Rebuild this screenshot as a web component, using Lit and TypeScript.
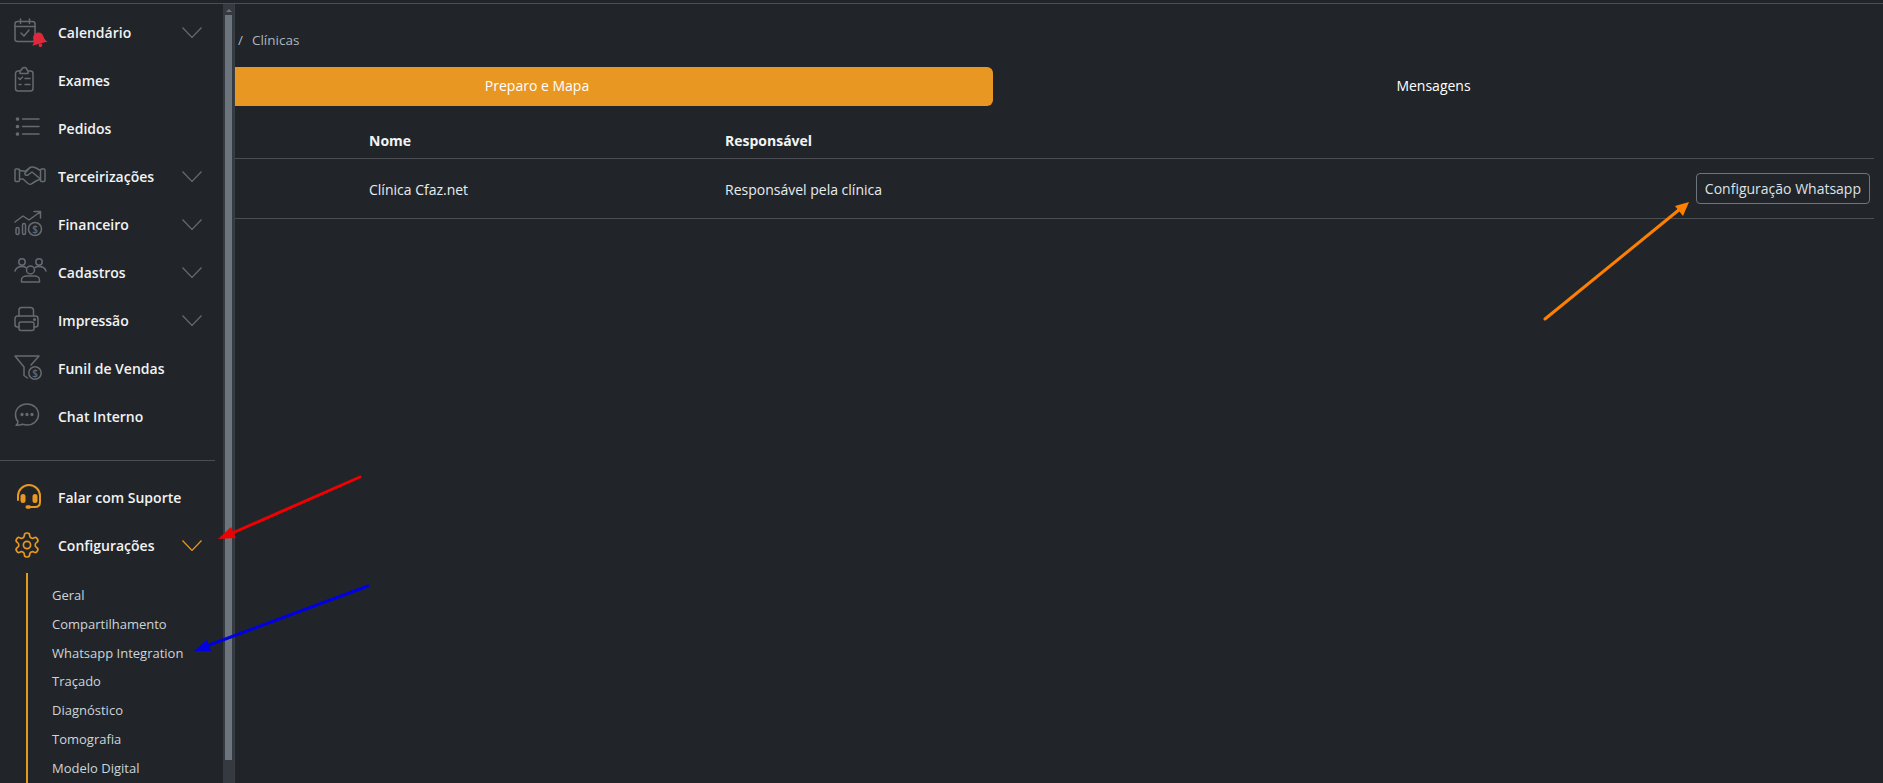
import { LitElement, html, css, svg } from 'lit';
import { customElement } from 'lit/decorators.js';

const coin = (cx: number, cy: number, r: number) => svg`
  <circle cx=${cx} cy=${cy} r=${r}></circle>
  <text x=${cx} y=${cy + 3.6} text-anchor="middle" font-size="10" font-family="Open Sans, sans-serif" fill="currentColor" stroke="none">$</text>`;

const icons: Record<string, unknown> = {
  calendar: svg`
    <rect x="2" y="5.5" width="20" height="20" rx="2.5"></rect>
    <path d="M2 10.5h20M7.5 3v4.5M16.5 3v4.5M8 17l3 3 5-6"></path>
    <g transform="rotate(-15 26 24)" fill="#e0283c" stroke="none">
      <path d="M26 16.5c-3.5 0-5.3 2.8-5.3 5.800 0 3-1.700 4.600-2.700 5.400h16c-1-.8-2.700-2.400-2.700-5.400 0-3-1.800-5.800-5.300-5.800z"></path>
      <circle cx="26" cy="29.5" r="1.8"></circle>
    </g>`,
  clipboard: svg`
    <path d="M7 7H5a2.5 2.5 0 0 0-2.5 2.5v15A2.5 2.5 0 0 0 5 27h12.5a2.5 2.5 0 0 0 2.5-2.5v-15A2.5 2.5 0 0 0 17.5 7H15"></path>
    <path d="M7 9.500V7.500A1.500 1.500 0 0 1 8.500 6c.3-1.500 1.400-2.500 2.800-2.500s2.500 1 2.700 2.500a1.500 1.500 0 0 1 1 1.500v2z"></path>
    <path d="M5.500 14l1.500 1.500 2.500-2.500M12 14.500h5M6 20.500h2M12 20.500h5"></path>`,
  list: svg`
    <circle cx="4.5" cy="7" r="1.1" fill="currentColor"></circle>
    <circle cx="4.5" cy="14.5" r="1.1" fill="currentColor"></circle>
    <circle cx="4.5" cy="22" r="1.1" fill="currentColor"></circle>
    <path d="M9.500 7h16.500M9.500 14.500h16.500M9.500 22h16.500"></path>`,
  handshake: svg`
    <rect x="2" y="9" width="4.5" height="12.5" rx="1"></rect>
    <rect x="27.5" y="9" width="4.5" height="12.5" rx="1"></rect>
    <path d="M6.500 10.500l5.500.8 5-3.800c2-1 4-.5 6 .5l4.500 2.500"></path>
    <path d="M17 7.500l-5 5.500c-1 1.500 1 3 3 2l4-3 8.500 7"></path>
    <path d="M6.500 19H10l5 4.500c1.500 1 3 1 4 0l4-2.500 4.500-2"></path>`,
  finance: svg`
    <path d="M2 14l8-6 6 4 11-8M21 3.500h6.500V10"></path>
    <rect x="3" y="19.5" width="3" height="7" rx="1.5"></rect>
    <rect x="9.5" y="15.5" width="3" height="11" rx="1.5"></rect>
    ${coin(22, 21, 6.5)}`,
  people: svg`
    <circle cx="9" cy="6" r="3.2"></circle>
    <circle cx="26" cy="6" r="3.2"></circle>
    <circle cx="17.5" cy="14" r="4"></circle>
    <path d="M8.500 26v-2c0-3 3-4 5-4h8c2 0 5 1 5 4v2z"></path>
    <path d="M2 15c1-3 4-4.500 7-4.500 1.500 0 3 .5 4 1M33 15c-1-3-4-4.500-7-4.500-1.500 0-3 .5-4 1"></path>`,
  printer: svg`
    <path d="M6 12V6a2.500 2.500 0 0 1 2.500-2.500h9a3 3 0 0 1 3 3V12"></path>
    <path d="M6 23H4.500A2.500 2.500 0 0 1 2 20.500v-6A2.500 2.500 0 0 1 4.500 12h18a2.500 2.500 0 0 1 2.500 2.500v6a2.500 2.500 0 0 1-2.500 2.500H21"></path>
    <rect x="6" y="18" width="15" height="8.5" rx="2"></rect>
    <circle cx="21.5" cy="15.5" r=".8" fill="currentColor"></circle>`,
  funnel: svg`
    <path d="M2 4h24l-8 9M2 4l9 11v8.500l3.500 2.500"></path>
    ${coin(22, 21, 6.2)}`,
  chat: svg`
    <path d="M5 21.500C3 19.700 2.500 17 2.500 14.500 2.500 8.500 7.500 4 14 4s11.500 4.500 11.500 10.500S20.500 25 14 25c-1.500 0-3-.3-4.500-.7-1.500.7-4 1-6.500 1 1-.7 2-2 2-3.800z"></path>
    <circle cx="9" cy="14.5" r=".9" fill="currentColor"></circle>
    <circle cx="14" cy="14.5" r=".9" fill="currentColor"></circle>
    <circle cx="19" cy="14.5" r=".9" fill="currentColor"></circle>`,
  headset: svg`
    <path stroke-width="2" d="M5 19v-4a11 11 0 0 1 22 0v6c0 3-2 5-5 5h-6"></path>
    <rect x="7.5" y="13" width="5" height="9" rx="2.5" fill="currentColor" stroke="none"></rect>
    <rect x="19.5" y="13" width="5" height="9" rx="2.5" fill="currentColor" stroke="none"></rect>
    <rect x="12.5" y="24.3" width="5.5" height="3.4" rx="1.7" fill="currentColor" stroke="none"></rect>`,
  gear: svg`
    <g transform="translate(-0.4 1.6) scale(1.2)" stroke-width="1.4">
      <path d="M12.220 2h-.44a2 2 0 0 0-2 2v.18a2 2 0 0 1-1 1.730l-.43.25a2 2 0 0 1-2 0l-.15-.08a2 2 0 0 0-2.730.73l-.22.38a2 2 0 0 0 .73 2.730l.15.1a2 2 0 0 1 1 1.720v.51a2 2 0 0 1-1 1.740l-.15.09a2 2 0 0 0-.73 2.730l.22.38a2 2 0 0 0 2.730.73l.15-.08a2 2 0 0 1 2 0l.43.25a2 2 0 0 1 1 1.730V20a2 2 0 0 0 2 2h.44a2 2 0 0 0 2-2v-.18a2 2 0 0 1 1-1.730l.43-.25a2 2 0 0 1 2 0l.15.08a2 2 0 0 0 2.730-.73l.22-.39a2 2 0 0 0-.73-2.730l-.15-.08a2 2 0 0 1-1-1.740v-.5a2 2 0 0 1 1-1.740l.15-.09a2 2 0 0 0 .73-2.730l-.22-.38a2 2 0 0 0-2.730-.73l-.15.08a2 2 0 0 1-2 0l-.43-.25a2 2 0 0 1-1-1.730V4a2 2 0 0 0-2-2z"></path>
      <circle cx="12" cy="12" r="3"></circle>
    </g>`,
};

type NavItem = { label: string; icon: string; expandable?: boolean };

const primaryItems: NavItem[] = [
  { label: 'Calendário', icon: 'calendar', expandable: true },
  { label: 'Exames', icon: 'clipboard' },
  { label: 'Pedidos', icon: 'list' },
  { label: 'Terceirizações', icon: 'handshake', expandable: true },
  { label: 'Financeiro', icon: 'finance', expandable: true },
  { label: 'Cadastros', icon: 'people', expandable: true },
  { label: 'Impressão', icon: 'printer', expandable: true },
  { label: 'Funil de Vendas', icon: 'funnel' },
  { label: 'Chat Interno', icon: 'chat' },
];

const settingsLinks = [
  'Geral',
  'Compartilhamento',
  'Whatsapp Integration',
  'Traçado',
  'Diagnóstico',
  'Tomografia',
  'Modelo Digital',
];

@customElement('app-root')
export class AppRoot extends LitElement {
  static styles = css`
    :host {
      display: block;
      position: relative;
      height: 783px;
      overflow: hidden;
      background: #212529;
      color: #e9ecef;
      font-family: 'Open Sans', sans-serif;
      font-size: 14px;
    }

    .top-line {
      height: 3px;
      border-bottom: 1px solid #4b4f54;
    }

    .main {
      padding: 0 9px 0 79px;
    }

    .breadcrumb {
      display: flex;
      gap: 9px;
      height: 63px;
      padding: 26px 0 0 159px;
      box-sizing: border-box;
      color: #adb5bd;
      font-size: 13.5px;
      line-height: 20px;
    }

    .tabs {
      display: grid;
      grid-template-columns: 914px 1fr;
      height: 39px;
      line-height: 38px;
      text-align: center;
      color: #fff;
    }

    .tab.active {
      padding-left: 2px;
      background: #e89723;
      border-radius: 6px;
    }

    .row {
      display: grid;
      grid-template-columns: 290px 356px 1fr auto;
      align-items: center;
      border-bottom: 1px solid #4b4f54;
    }

    .row.head {
      height: 53px;
      padding-top: 16px;
      box-sizing: border-box;
      font-weight: 700;
      color: #f1f3f5;
    }

    .row.body {
      height: 59px;
    }

    .row.body span {
      padding-top: 2px;
    }

    .whatsapp {
      margin-right: 4px;
      padding: 0 8px;
      height: 31px;
      border: 1px solid #6c757d;
      border-radius: 4px;
      background: transparent;
      color: #dee2e6;
      font: inherit;
    }

    .sidebar {
      position: absolute;
      left: 0;
      top: 4px;
      bottom: 0;
      width: 235px;
      display: flex;
      background: #212529;
      border-right: 1px solid #3a3f45;
      box-sizing: border-box;
    }

    .nav {
      flex: 1;
      min-width: 0;
      padding-top: 4px;
      overflow: hidden;
    }

    .nav-item {
      display: flex;
      align-items: center;
      height: 48px;
      padding: 0 21px 0 13px;
      color: #646b72;
      font-weight: 600;
    }

    .nav-item.accent {
      color: #e8981f;
    }

    .nav-item .icon {
      flex: none;
      width: 32px;
      height: 32px;
      margin-right: 13px;
      overflow: visible;
      fill: none;
      stroke: currentColor;
      stroke-width: 1.5;
      stroke-linecap: round;
      stroke-linejoin: round;
    }

    .nav-item .label {
      flex: 1;
      color: #f1f3f5;
    }

    .nav-item .chevron {
      width: 20px;
      height: 11px;
      fill: none;
      stroke: currentColor;
      stroke-width: 1.2;
    }

    .divider {
      height: 1px;
      margin: 20px 8px 12px 0;
      background: #4b4f54;
    }

    .submenu {
      margin: 4px 0 0 26px;
      padding: 8px 0 30px 24px;
      border-left: 2px solid #e8981f;
    }

    .submenu div {
      height: 28.8px;
      line-height: 29px;
      font-size: 13px;
      color: #ced4da;
    }

    .scrollbar {
      flex: none;
      width: 11px;
      display: flex;
      flex-direction: column;
      align-items: center;
      background: #343a40;
    }

    .scrollbar .up {
      width: 0;
      height: 0;
      margin: 5px 0 3px;
      border: 3px solid transparent;
      border-top: 0;
      border-bottom: 3px solid #6c757d;
    }

    .scrollbar .thumb {
      width: 7px;
      height: 745px;
      background: #6c757d;
    }

    .annotations {
      position: absolute;
      inset: 0;
      width: 100%;
      height: 100%;
      pointer-events: none;
    }
  `;

  renderNavItem(item: NavItem, accent = false) {
    return html`
      <div class="nav-item ${accent ? 'accent' : ''}">
        <svg class="icon" viewBox="0 0 32 32">${icons[item.icon]}</svg>
        <span class="label">${item.label}</span>
        ${item.expandable
          ? html`<svg class="chevron" viewBox="0 0 20 11"><path d="M.5.5l9.500 10 9.500-10"></path></svg>`
          : ''}
      </div>
    `;
  }

  render() {
    return html`
      <div class="top-line"></div>

      <main class="main">
        <div class="breadcrumb"><span>/</span><span>Clínicas</span></div>
        <div class="tabs">
          <div class="tab active">Preparo e Mapa</div>
          <div class="tab">Mensagens</div>
        </div>
        <div class="row head">
          <span></span>
          <span>Nome</span>
          <span>Responsável</span>
        </div>
        <div class="row body">
          <span></span>
          <span>Clínica Cfaz.net</span>
          <span>Responsável pela clínica</span>
          <button class="whatsapp">Configuração Whatsapp</button>
        </div>
      </main>

      <aside class="sidebar">
        <nav class="nav">
          ${primaryItems.map(item => this.renderNavItem(item))}
          <div class="divider"></div>
          ${this.renderNavItem({ label: 'Falar com Suporte', icon: 'headset' }, true)}
          ${this.renderNavItem({ label: 'Configurações', icon: 'gear', expandable: true }, true)}
          <div class="submenu">${settingsLinks.map(link => html`<div>${link}</div>`)}</div>
        </nav>
        <div class="scrollbar">
          <div class="up"></div>
          <div class="thumb"></div>
        </div>
      </aside>

      <svg class="annotations" viewBox="0 0 1883 783">
        <path d="M360 477L228 535" stroke="#f00000" stroke-width="3" stroke-linecap="round"></path>
        <path d="M218 539L231 527L236 538z" fill="#f00000"></path>
        <path d="M368 586L204 647" stroke="#0000e0" stroke-width="3" stroke-linecap="round"></path>
        <path d="M194 651L207 640L211 651z" fill="#0000e0"></path>
        <path d="M1545 319L1680 209" stroke="#ff8000" stroke-width="3" stroke-linecap="round"></path>
        <path d="M1689 202L1675 206L1683 216z" fill="#ff8000"></path>
      </svg>
    `;
  }
}
